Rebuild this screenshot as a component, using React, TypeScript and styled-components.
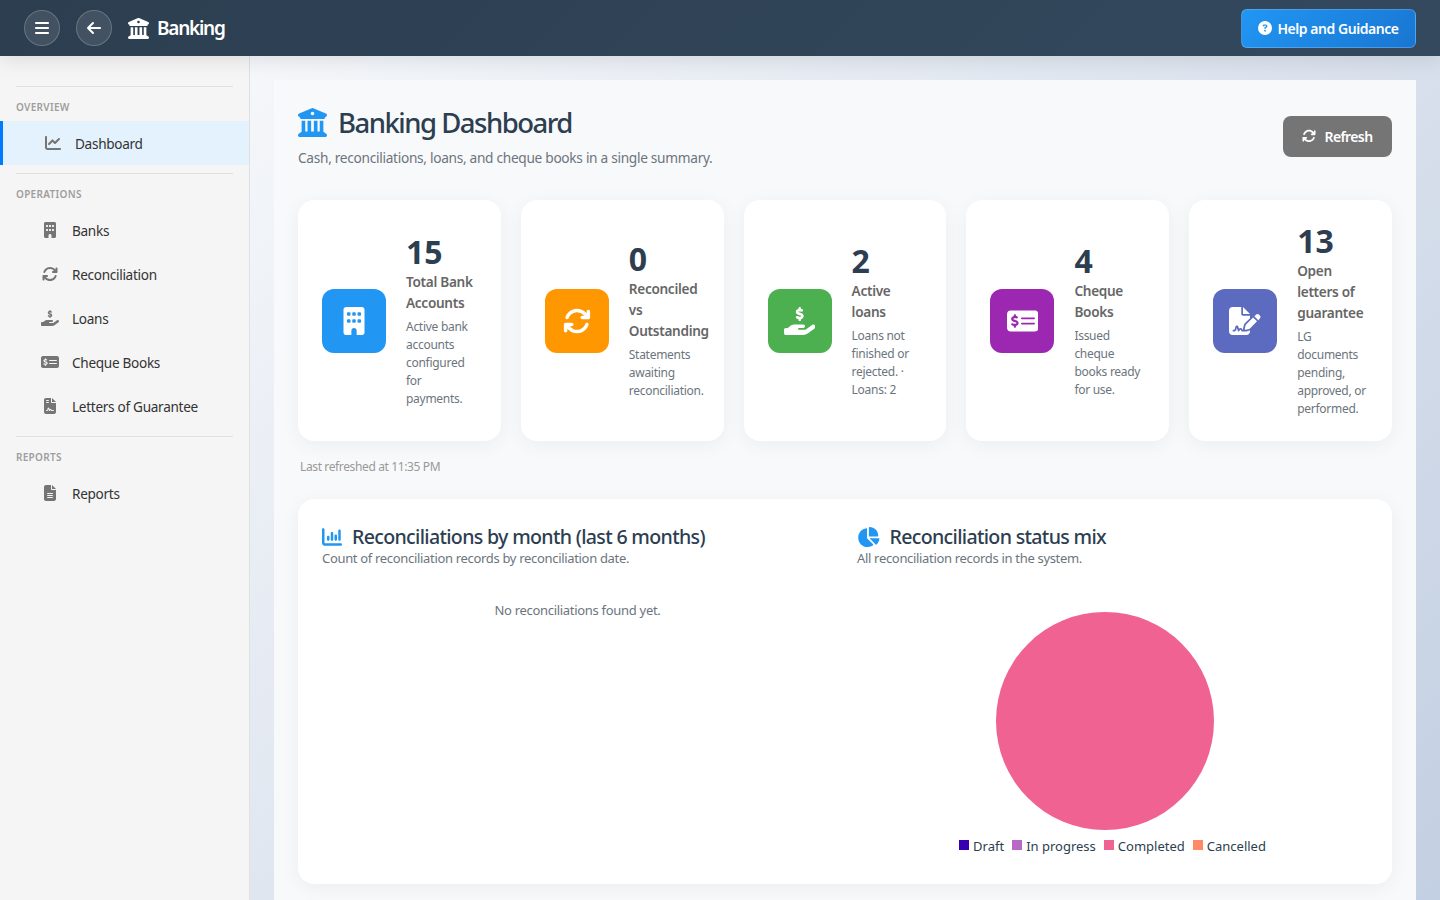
import styled, { createGlobalStyle } from 'styled-components';
import type { ReactNode } from 'react';
import {
  FaArrowLeft, FaArrowsRotate, FaBars, FaBuilding, FaBuildingColumns, FaChartColumn, FaChartLine, FaChartPie,
  FaCircleQuestion, FaFileContract, FaFileLines, FaFileSignature, FaHandHoldingDollar, FaMoneyCheckDollar,
} from 'react-icons/fa6';

const Global = createGlobalStyle`
  html, body { margin: 0; height: 100%; overflow: hidden; }
  body { font-family: "Noto Sans", "Open Sans", sans-serif; color: #333; }
  * { box-sizing: border-box; }
`;

const Page = styled.div`display: flex; flex-direction: column; height: 100vh; overflow: hidden;`;

const Header = styled.header`
  height: 56px; flex-shrink: 0; padding: 0 24px; display: flex; align-items: center; z-index: 2;
  background: linear-gradient(135deg, #2c3e50, #34495e); box-shadow: 0 4px 20px rgba(0, 0, 0, 0.1);
`;
const RoundBtn = styled.button`
  width: 36px; height: 36px; border-radius: 50%; margin-right: 16px; padding: 0;
  display: flex; align-items: center; justify-content: center; color: #fff; font-size: 16px;
  background: rgba(255, 255, 255, 0.1); border: 1px solid rgba(255, 255, 255, 0.2);
`;
const Brand = styled.div`
  display: flex; align-items: center; gap: 8px; color: #fff;
  font-size: 19px; font-weight: 600; letter-spacing: -1.25px;
  svg { font-size: 21px; }
`;
const HelpBtn = styled.button`
  margin-left: auto; width: 175px; height: 39px; border-radius: 6px; color: #fff;
  display: flex; align-items: center; justify-content: center; gap: 5px;
  font: 600 14px "Noto Sans", sans-serif; letter-spacing: -0.45px;
  background: linear-gradient(135deg, #2196f3, #1976d2); border: 1px solid rgba(255, 255, 255, 0.2);
`;

const Body = styled.div`flex: 1; display: flex; min-height: 0;`;

const Sidebar = styled.aside`
  width: 250px; flex-shrink: 0; background: #f5f5f5; border-right: 1px solid #e0e0e0; padding-top: 30px;
`;
const Section = styled.div`
  border-top: 1px solid #e0e0e0; margin: 0 16px; padding-top: 13px; height: 35px;
  font-size: 10px; line-height: 14px; font-weight: 600; letter-spacing: 0.3px; color: #9e9e9e;
  text-transform: uppercase;
`;
const NavItem = styled.div<{ $active?: boolean }>`
  height: 44px; display: flex; align-items: center; gap: 12px; font-size: 13.6px; letter-spacing: -0.3px;
  padding-left: 40px;
  margin-bottom: ${p => (p.$active ? '8px' : '0')};
  color: #333;
  background: ${p => (p.$active ? '#e3f2fd' : 'transparent')};
  border-left: ${p => (p.$active ? '3px solid #007bff' : 'none')};
  svg { width: 20px; font-size: 16px; color: #757575; flex-shrink: 0; }
`;
const NavGroup = styled.div`margin-bottom: 8px;`;

const Main = styled.main`
  flex: 1; min-width: 0; padding: 24px; overflow: hidden;
  background: linear-gradient(135deg, #f5f7fa 0%, #c3cfe2 100%);
`;
const Panel = styled.div`background: #f8f9fa; padding: 24px;`;

const TopRow = styled.div`display: flex; align-items: center; justify-content: space-between; margin-bottom: 32px;`;
const Title = styled.h1`
  margin: 0 0 6px; display: flex; align-items: center; gap: 11px; height: 38px; padding-bottom: 1px;
  font-size: 27.5px; font-weight: 500; letter-spacing: -1.5px; color: #2c3e50;
  svg { font-size: 29px; color: #2196f3; }
`;
const Subtitle = styled.p`margin: 0; font-size: 13.7px; line-height: 20px; letter-spacing: -0.3px; color: #6c757d;`;
const RefreshBtn = styled.button`
  width: 109px; height: 41px; border: none; border-radius: 8px; background: #757575; color: #fff;
  display: flex; align-items: center; justify-content: center; gap: 8px;
  font: 600 14px "Noto Sans", sans-serif; letter-spacing: -0.6px;
`;

const Cards = styled.div`display: grid; grid-template-columns: repeat(5, minmax(0, 1fr)); gap: 20px;`;
const Card = styled.div`
  height: 241px; background: #fff; border-radius: 16px; padding: 24px; display: flex; align-items: center; gap: 20px;
  box-shadow: 0 4px 20px rgba(0, 0, 0, 0.05);
`;
const CardIcon = styled.div<{ $bg: string; $wide?: boolean }>`
  width: 64px; height: 64px; flex-shrink: 0; border-radius: 12px; background: ${p => p.$bg}; color: #fff;
  display: flex; align-items: center; justify-content: center;
  svg { width: ${p => (p.$wide ? '31.5px' : '28px')}; height: 28px; }
`;
const CardText = styled.div`flex: 1; min-width: 0;`;
const CardNum = styled.div`font-size: 32px; line-height: 36px; font-weight: 700; color: #2c3e50; margin-bottom: 1px;`;
const CardTitle = styled.div`font-size: 13.6px; line-height: 21px; font-weight: 600; letter-spacing: -0.3px; color: #666; margin-bottom: 5px;`;
const CardDesc = styled.div`font-size: 12px; line-height: 18px; letter-spacing: -0.28px; color: #6c757d;`;

const Refreshed = styled.div`margin: 17px 0 23px 2px; font-size: 12px; line-height: 18px; letter-spacing: -0.37px; color: #999;`;

const ChartCard = styled.div`
  background: #fff; border-radius: 16px; padding: 24px; height: 385px;
  display: grid; grid-template-columns: 1fr 1fr; gap: 24px; box-shadow: 0 4px 20px rgba(0, 0, 0, 0.05);
`;
const ChartTitle = styled.h2<{ $wide?: boolean }>`
  margin: 0 0 1px; display: flex; align-items: center; gap: 10px; height: 27px;
  font-size: 19.6px; font-weight: 500; letter-spacing: -0.68px; color: #2c3e50;
  svg { width: ${p => (p.$wide ? '22.5px' : '20px')}; height: 20px; color: #2196f3; }
`;
const ChartSub = styled.p`margin: 0; font-size: 13px; line-height: 15px; letter-spacing: -0.32px; color: #6c757d;`;
const Empty = styled.p`margin: 35px 0 0; text-align: center; font-size: 13px; line-height: 18px; letter-spacing: -0.3px; color: #6c757d;`;
const Pie = styled.svg`display: block; width: 100%; height: 218px; margin-top: 46px;`;
const Legend = styled.div`display: flex; justify-content: center; gap: 8px; margin-top: 7px; font-size: 13px; line-height: 18px; color: #2c3e50;`;
const LegendItem = styled.span<{ $c: string }>`
  display: flex; align-items: center; gap: 4px;
  &::before { content: ''; width: 10px; height: 10px; margin-top: -3px; background: ${p => p.$c}; }
`;

type Stat = { icon: ReactNode; bg: string; wide?: boolean; num: number; title: string; desc: string };

const stats: Stat[] = [
  { icon: <FaBuilding />, bg: '#2196f3', num: 15, title: 'Total Bank Accounts', desc: 'Active bank accounts configured for payments.' },
  { icon: <FaArrowsRotate />, bg: '#ff9800', num: 0, title: 'Reconciled vs Outstanding', desc: 'Statements awaiting reconciliation.' },
  { icon: <FaHandHoldingDollar />, bg: '#4caf50', wide: true, num: 2, title: 'Active loans', desc: 'Loans not finished or rejected. · Loans: 2' },
  { icon: <FaMoneyCheckDollar />, bg: '#9c27b0', wide: true, num: 4, title: 'Cheque Books', desc: 'Issued cheque books ready for use.' },
  { icon: <FaFileSignature />, bg: '#5c6bc0', wide: true, num: 13, title: 'Open letters of guarantee', desc: 'LG documents pending, approved, or performed.' },
];

const operations = [
  { icon: <FaBuilding />, label: 'Banks' },
  { icon: <FaArrowsRotate />, label: 'Reconciliation' },
  { icon: <FaHandHoldingDollar />, label: 'Loans' },
  { icon: <FaMoneyCheckDollar />, label: 'Cheque Books' },
  { icon: <FaFileContract />, label: 'Letters of Guarantee' },
];

const legend = [
  { label: 'Draft', color: '#3700b3' },
  { label: 'In progress', color: '#ba68c8' },
  { label: 'Completed', color: '#f06292' },
  { label: 'Cancelled', color: '#ff8a65' },
];

export default function App() {
  return (
    <Page>
      <Global />
      <Header>
        <RoundBtn><FaBars /></RoundBtn>
        <RoundBtn><FaArrowLeft /></RoundBtn>
        <Brand><FaBuildingColumns />Banking</Brand>
        <HelpBtn><FaCircleQuestion />Help and Guidance</HelpBtn>
      </Header>
      <Body>
        <Sidebar>
          <Section>Overview</Section>
          <NavItem $active><FaChartLine />Dashboard</NavItem>
          <Section>Operations</Section>
          <NavGroup>
            {operations.map(o => <NavItem key={o.label}>{o.icon}{o.label}</NavItem>)}
          </NavGroup>
          <Section>Reports</Section>
          <NavItem><FaFileLines />Reports</NavItem>
        </Sidebar>
        <Main>
          <Panel>
            <TopRow>
              <div>
                <Title><FaBuildingColumns />Banking Dashboard</Title>
                <Subtitle>Cash, reconciliations, loans, and cheque books in a single summary.</Subtitle>
              </div>
              <RefreshBtn><FaArrowsRotate />Refresh</RefreshBtn>
            </TopRow>
            <Cards>
              {stats.map(s => (
                <Card key={s.title}>
                  <CardIcon $bg={s.bg} $wide={s.wide}>{s.icon}</CardIcon>
                  <CardText>
                    <CardNum>{s.num}</CardNum>
                    <CardTitle>{s.title}</CardTitle>
                    <CardDesc>{s.desc}</CardDesc>
                  </CardText>
                </Card>
              ))}
            </Cards>
            <Refreshed>Last refreshed at 11:35 PM</Refreshed>
            <ChartCard>
              <div>
                <ChartTitle><FaChartColumn />Reconciliations by month (last 6 months)</ChartTitle>
                <ChartSub>Count of reconciliation records by reconciliation date.</ChartSub>
                <Empty>No reconciliations found yet.</Empty>
              </div>
              <div>
                <ChartTitle $wide><FaChartPie />Reconciliation status mix</ChartTitle>
                <ChartSub>All reconciliation records in the system.</ChartSub>
                <Pie viewBox="0 0 511 218">
                  <circle cx="248" cy="109" r="109" fill="#f06292" />
                </Pie>
                <Legend>
                  {legend.map(l => <LegendItem key={l.label} $c={l.color}>{l.label}</LegendItem>)}
                </Legend>
              </div>
            </ChartCard>
          </Panel>
        </Main>
      </Body>
    </Page>
  );
}
